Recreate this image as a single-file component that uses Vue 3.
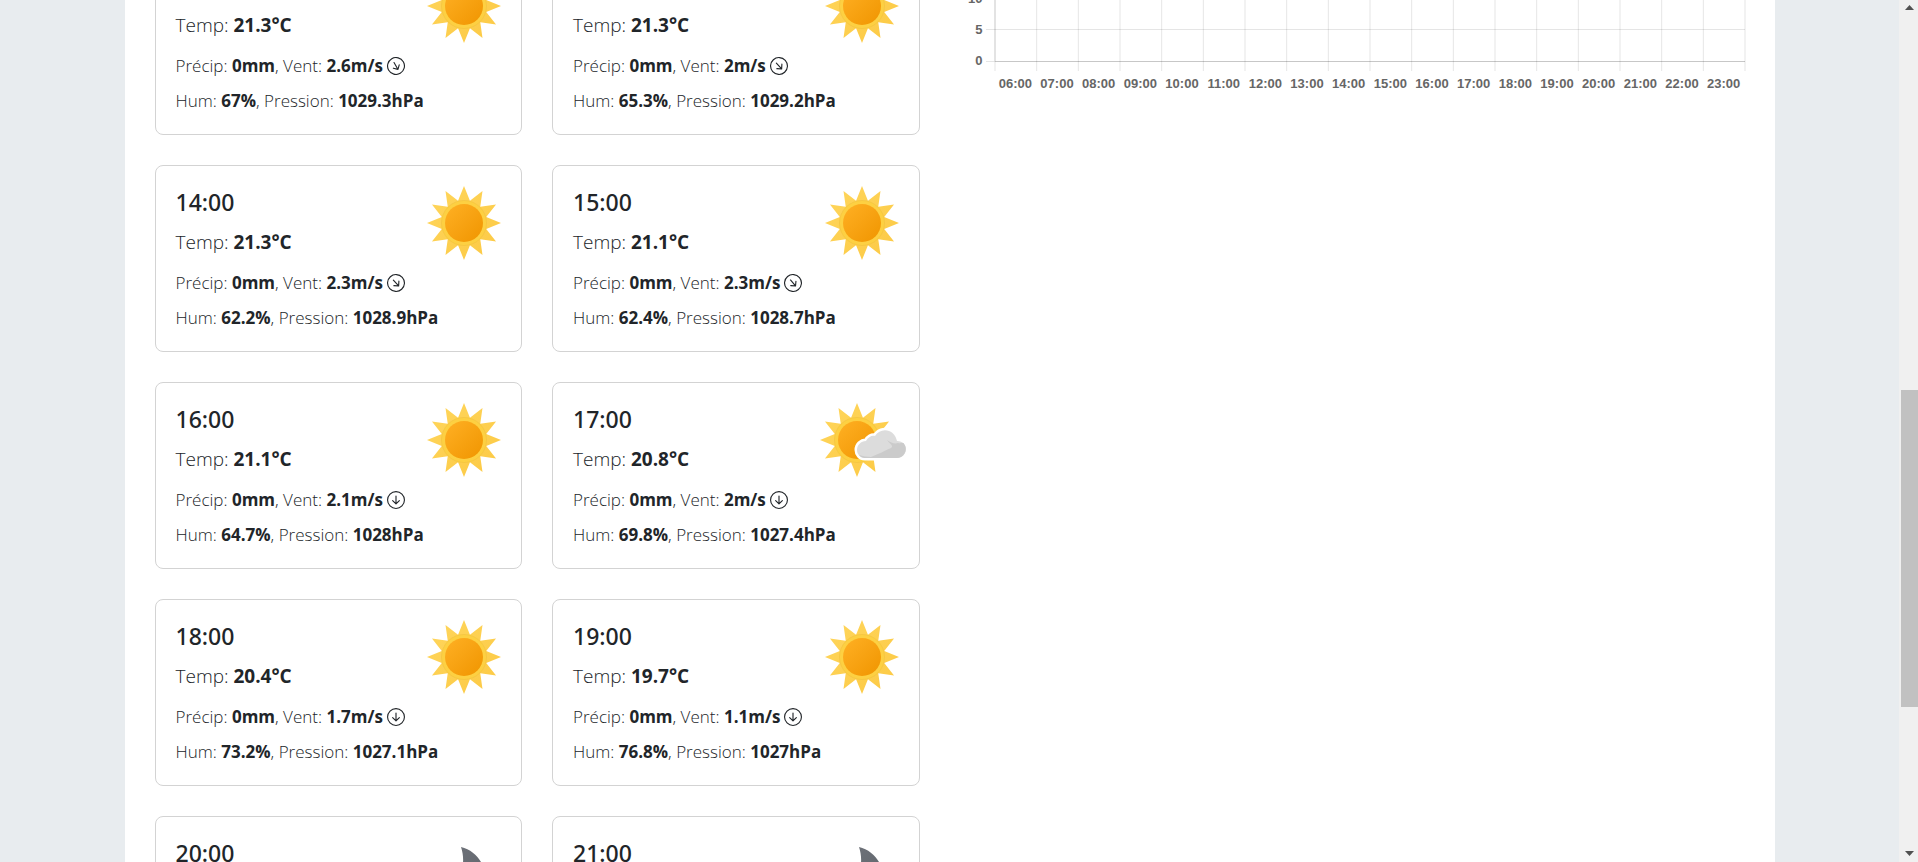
<script setup>
const hours = [
  { time: '12:00', temp: 21.3, wind: '2.6', turn: -30, hum: '67', pressure: '1029.3', sky: 'sun' },
  { time: '13:00', temp: 21.3, wind: '2', turn: -42, hum: '65.3', pressure: '1029.2', sky: 'sun' },
  { time: '14:00', temp: 21.3, wind: '2.3', turn: -42, hum: '62.2', pressure: '1028.9', sky: 'sun' },
  { time: '15:00', temp: 21.1, wind: '2.3', turn: -40, hum: '62.4', pressure: '1028.7', sky: 'sun' },
  { time: '16:00', temp: 21.1, wind: '2.1', turn: 0, hum: '64.7', pressure: '1028', sky: 'sun' },
  { time: '17:00', temp: 20.8, wind: '2', turn: 0, hum: '69.8', pressure: '1027.4', sky: 'cloudy' },
  { time: '18:00', temp: 20.4, wind: '1.7', turn: 0, hum: '73.2', pressure: '1027.1', sky: 'sun' },
  { time: '19:00', temp: 19.7, wind: '1.1', turn: 0, hum: '76.8', pressure: '1027', sky: 'sun' },
  { time: '20:00', temp: 18.9, wind: '1', turn: 0, hum: '79', pressure: '1027', sky: 'moon' },
  { time: '21:00', temp: 18.2, wind: '1', turn: 0, hum: '81', pressure: '1027', sky: 'moon' },
]

const ticks = Array.from({ length: 18 }, (_, i) => String(i + 6).padStart(2, '0') + ':00')
const levels = [10, 5, 0]

// Twelve-pointed star centred on the origin
const rays = Array.from({ length: 24 }, (_, i) => {
  const r = i % 2 ? 23 : 37
  const a = (i * Math.PI) / 12
  return `${(r * Math.sin(a)).toFixed(2)},${(-r * Math.cos(a)).toFixed(2)}`
}).join(' ')
</script>

<template>
  <div class="page">
    <svg class="defs" width="0" height="0" aria-hidden="true">
      <defs>
        <linearGradient id="ray" x1="0" y1="0" x2="1" y2="1">
          <stop offset="0" stop-color="#ffd65c" />
          <stop offset="1" stop-color="#fcc944" />
        </linearGradient>
        <linearGradient id="disc" x1="0" y1="0" x2="1" y2="1">
          <stop offset="0" stop-color="#ffb024" />
          <stop offset="1" stop-color="#f09500" />
        </linearGradient>
        <linearGradient id="moon" x1="0" y1="0" x2="1" y2="1">
          <stop offset="0" stop-color="#72767d" />
          <stop offset="1" stop-color="#5d6269" />
        </linearGradient>
        <g id="sunshape">
          <polygon :points="rays" fill="url(#ray)" />
          <circle r="22.5" fill="#fdd042" stroke="#f2c23e" stroke-opacity=".6" />
          <circle r="19" fill="url(#disc)" />
        </g>
      </defs>
    </svg>

    <div class="viewport">
      <main class="container">
        <section class="forecast">
          <article v-for="h in hours" :key="h.time" class="card">
            <div class="head">
              <div>
                <h5>{{ h.time }}</h5>
                <p class="temp">Temp: <strong>{{ h.temp.toFixed(1) }}°C</strong></p>
              </div>
              <svg class="sky" viewBox="0 0 74 74" aria-hidden="true">
                <use v-if="h.sky === 'sun'" href="#sunshape" x="37" y="37" />
                <g v-else-if="h.sky === 'cloudy'">
                  <use href="#sunshape" x="32" y="37" />
                  <path
                    d="M40 55C35 55 32 51 32 47C32 42 36 38 41 38C43 34 47 32 50 33C53 28 59 26 64 28C69 30 71 34 72 38C78 38 81 42 81 46C81 51 77 55 72 55Z"
                    fill="#dcdcdc" stroke="#fff" stroke-width="5" paint-order="stroke"
                  />
                  <path
                    d="M46 54C54 51 61 47 66 45C69 43 65 41 62 37C66 40 70 41 73 40C76 41 79 39 79 41C82 45 81 51 76 54Q74 55 72 55H40Q36 55 34 52Q40 54 46 54Z"
                    fill="#cbcbcb"
                  />
                </g>
                <path v-else d="M34 10C43 12 50 18 54 25C62 41 53 63 33 66C22 68 13 62 9 54C26 54 42 34 34 10Z" fill="url(#moon)" />
              </svg>
            </div>
            <p class="detail">
              Précip: <strong>0mm</strong>, Vent: <strong>{{ h.wind }}m/s</strong>
              <svg class="arrow" viewBox="0 0 16 16" aria-hidden="true">
                <path
                  :transform="`rotate(${h.turn} 8 8)`"
                  d="M1 8a7 7 0 1 0 14 0A7 7 0 0 0 1 8m15 0A8 8 0 1 1 0 8a8 8 0 0 1 16 0M8.5 4.5a.5.5 0 0 0-1 0v5.793L5.354 8.146a.5.5 0 1 0-.708.708l3 3a.5.5 0 0 0 .708 0l3-3a.5.5 0 0 0-.708-.708L8.5 10.293z"
                  fill="#212529"
                />
              </svg>
            </p>
            <p class="detail">
              Hum: <strong>{{ h.hum }}%</strong>, Pression: <strong>{{ h.pressure }}hPa</strong>
            </p>
          </article>
        </section>

        <section class="chart">
          <div class="levels">
            <span v-for="l in levels" :key="l">{{ l }}</span>
          </div>
          <div class="plot">
            <svg class="lines" aria-hidden="true">
              <line
                v-for="i in 18" :key="i" :x1="`${(i * 100) / 18}%`" :x2="`${(i * 100) / 18}%`"
                y1="0" y2="123" class="soft"
              />
              <line x1="0" x2="0" y1="0" y2="113" class="axis" />
              <line x1="0" x2="0" y1="113" y2="123" class="soft" />
              <line x1="-9" x2="100%" y1="50" y2="50" class="soft" />
              <line x1="-9" x2="100%" y1="81.5" y2="81.5" class="soft" />
              <line x1="-9" x2="0" y1="113.5" y2="113.5" class="soft" />
              <line x1="0" x2="100%" y1="113.5" y2="113.5" class="axis" />
            </svg>
            <div class="ticks">
              <span v-for="t in ticks" :key="t">{{ t }}</span>
            </div>
          </div>
        </section>
      </main>
    </div>

    <div class="scrollbar" aria-hidden="true">
      <svg viewBox="0 0 17 17"><path d="M4 10L8.5 5L13 10Z" fill="#505050" /></svg>
      <div class="before"></div>
      <div class="thumb"></div>
      <div class="after"></div>
      <svg viewBox="0 0 17 17"><path d="M4 6L8.5 11L13 6Z" fill="#505050" /></svg>
    </div>
  </div>
</template>

<style>
body {
  background: #e8ecef;
}
</style>

<style scoped>
.page {
  display: flex;
  height: 100vh;
  overflow: hidden;
  background: #e8ecef;
  color: #212529;
  font-family: "Segoe UI", "Open Sans", "Noto Sans", sans-serif;
}
.defs {
  position: absolute;
}
.viewport {
  flex: 1;
  min-width: 0;
  overflow: hidden;
}
.container {
  display: grid;
  grid-template-columns: 1fr 1fr;
  box-sizing: border-box;
  max-width: 1650px;
  margin: -52px auto 0;
  background: #fff;
}
.forecast {
  display: grid;
  grid-template-columns: 1fr 1fr;
  gap: 30px;
  padding: 0 30px 30px;
}
.card {
  box-sizing: border-box;
  padding: 20px 20px 18px;
  border: 1px solid #d3d3d3;
  border-radius: 8px;
}
.head {
  display: flex;
  justify-content: space-between;
  margin-bottom: 8px;
}
.sky {
  width: 74px;
  height: 74px;
  overflow: visible;
}
h5 {
  margin: 1px 0 10px;
  font-family: "Segoe UI", "Noto Sans", sans-serif;
  font-size: 23px;
  font-weight: 500;
  line-height: 30px;
}
p {
  margin: 0;
  font-weight: 300;
}
strong {
  font-weight: 700;
}
.temp {
  font-size: 19px;
  line-height: 30px;
}
.detail {
  font-size: 17px;
  line-height: 30px;
  white-space: nowrap;
}
.detail + .detail {
  margin-top: 5px;
}
.arrow {
  width: 18px;
  height: 18px;
  margin-left: 4px;
  vertical-align: -3px;
}
.chart {
  display: flex;
  padding-right: 30px;
  color: #666;
  font: bold 13px "Liberation Sans Narrow", "Liberation Sans", sans-serif;
}
.levels {
  display: flex;
  flex-direction: column;
  box-sizing: border-box;
  width: 45px;
  padding: 35px 12px 0 0;
  text-align: right;
}
.levels span {
  height: 31px;
  line-height: 31px;
}
.plot {
  flex: 1;
  min-width: 0;
}
.lines {
  display: block;
  width: 100%;
  height: 123px;
  overflow: visible;
}
.soft {
  stroke: rgba(0, 0, 0, 0.1);
}
.axis {
  stroke: rgba(0, 0, 0, 0.22);
}
.ticks {
  display: grid;
  grid-template-columns: repeat(18, 1fr);
  padding-top: 3px;
  line-height: 20px;
  text-align: center;
}
.scrollbar {
  display: flex;
  flex-direction: column;
  width: 17px;
  padding-left: 2px;
  background: #f0f0f0;
}
.scrollbar svg {
  width: 17px;
  height: 17px;
}
.before {
  flex: 373;
}
.thumb {
  flex: 317;
  background: #c1c1c1;
}
.after {
  flex: 138;
}
</style>
